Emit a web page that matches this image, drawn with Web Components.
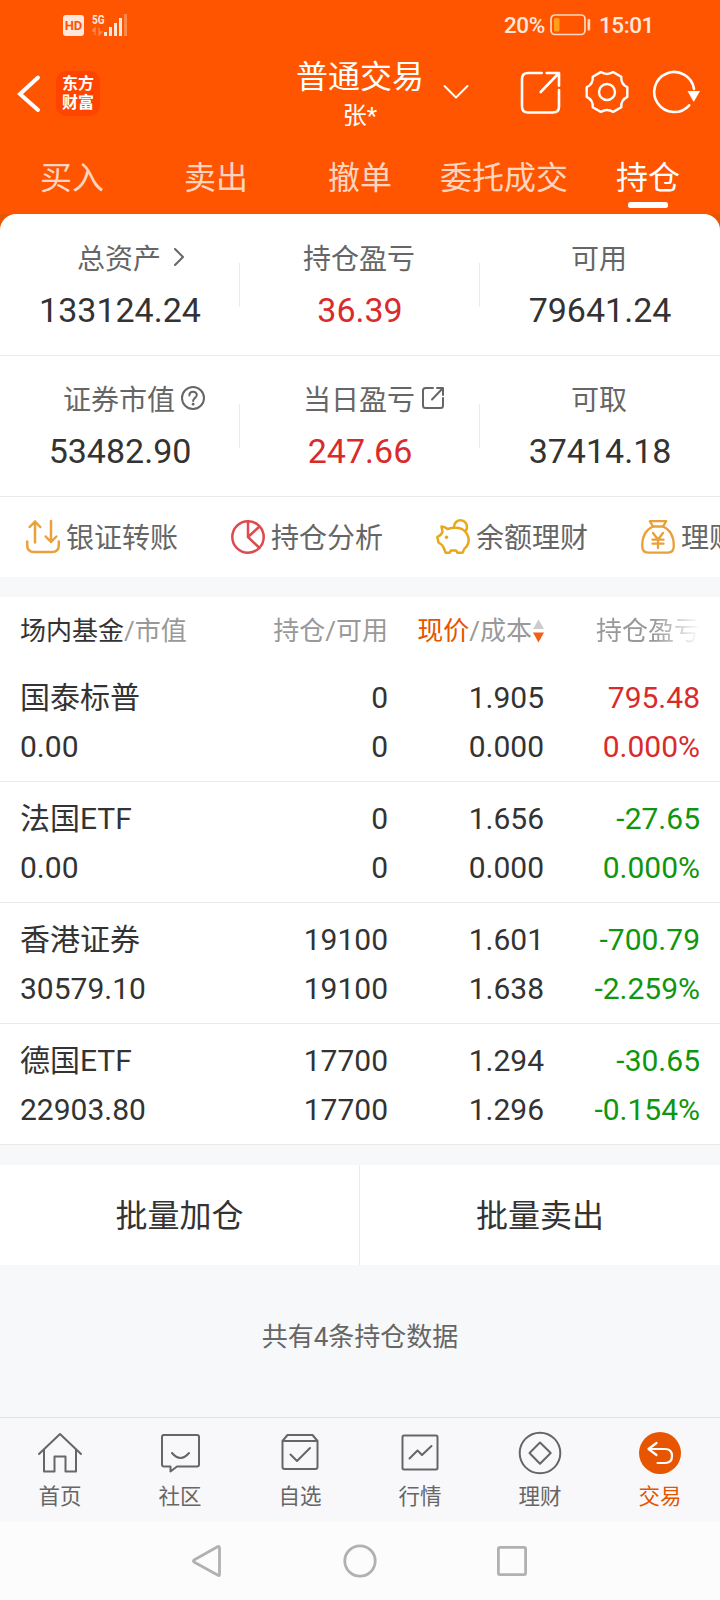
<!DOCTYPE html>
<html lang="zh-CN">
  <head>
    <meta charset="utf-8" />
    <meta name="viewport" content="width=device-width, initial-scale=1"/>
    <title>持仓</title>
    <style>
      body {
        margin: 0;
        background: #f7f8fa;
        color: #333;
        font-family: Roboto, "Noto Sans CJK SC", sans-serif;
      }
    </style>
  </head>
  <body>
    <trade-app>
      <status-bar slot="top"></status-bar>
      <trade-header slot="top" user="张*">普通交易</trade-header>
      <trade-tabs slot="top">
        <trade-tab>买入</trade-tab>
        <trade-tab>卖出</trade-tab>
        <trade-tab>撤单</trade-tab>
        <trade-tab>委托成交</trade-tab>
        <trade-tab active>持仓</trade-tab>
      </trade-tabs>

      <asset-grid>
        <asset-cell value="133124.24">总资产<ui-icon slot="icon" name="next"></ui-icon></asset-cell>
        <asset-cell value="36.39" up>持仓盈亏</asset-cell>
        <asset-cell value="79641.24">可用</asset-cell>
        <asset-cell value="53482.90">证券市值<ui-icon slot="icon" name="help"></ui-icon></asset-cell>
        <asset-cell value="247.66" up>当日盈亏<ui-icon slot="icon" name="open"></ui-icon></asset-cell>
        <asset-cell value="37414.18">可取</asset-cell>
      </asset-grid>

      <quick-actions>
        <quick-action icon="transfer">银证转账</quick-action>
        <quick-action icon="pie">持仓分析</quick-action>
        <quick-action icon="piggy">余额理财</quick-action>
        <quick-action icon="bag">理财</quick-action>
      </quick-actions>

      <holding-table>
        <holding-row name="国泰标普" market="0.00" held="0" free="0" price="1.905" cost="0.000" profit="795.48" rate="0.000%" trend="up"></holding-row>
        <holding-row name="法国ETF" market="0.00" held="0" free="0" price="1.656" cost="0.000" profit="-27.65" rate="0.000%" trend="down"></holding-row>
        <holding-row name="香港证券" market="30579.10" held="19100" free="19100" price="1.601" cost="1.638" profit="-700.79" rate="-2.259%" trend="down"></holding-row>
        <holding-row name="德国ETF" market="22903.80" held="17700" free="17700" price="1.294" cost="1.296" profit="-30.65" rate="-0.154%" trend="down"></holding-row>
      </holding-table>

      <batch-bar>
        <span>批量加仓</span>
        <span>批量卖出</span>
      </batch-bar>
      <list-summary>共有4条持仓数据</list-summary>

      <app-nav slot="bottom">
        <nav-item icon="home">首页</nav-item>
        <nav-item icon="chat">社区</nav-item>
        <nav-item icon="check">自选</nav-item>
        <nav-item icon="chart">行情</nav-item>
        <nav-item icon="money">理财</nav-item>
        <nav-item icon="trade" active>交易</nav-item>
      </app-nav>
      <system-nav slot="bottom"></system-nav>
    </trade-app>

    <script>
      // name: [width, height, markup]
      const ICONS = {
        back: [24, 38, '<path d="M21 3.500 3 20 21 36" stroke-width="4" stroke-linejoin="miter"/>'],
        down: [24, 14, '<path d="M.5 1 12 12.500 23.500 1" stroke-width="1.900"/>'],
        share: [44, 46, '<path d="M23.700 4H10Q4 4 4 10V37.500Q4 43.500 10 43.500H35Q41 43.500 41 37.500V21M28.700 4H41V16.700M22.700 23 40.500 4.500" stroke-width="2.600"/>'],
        gear: [46, 46, '<g transform="translate(23 23)" stroke-width="2.400"><path d="M20.300-4.800V4.800Q13.600 8 14.300 15.200L6.200 19.900Q0 16-6.200 19.900L-14.300 15.200Q-13.600 8-20.300 4.800V-4.800Q-13.600-8-14.300-15.200L-6.200-19.900Q0-16 6.200-19.900L14.300-15.200Q13.600-8 20.300-4.800Z"/><circle r="8"/></g>'],
        refresh: [48, 46, '<path d="M37.200 36.300A20 20 0 1 1 42 20" stroke-width="2.600"/><path d="M35.500 22H48L41.700 33Z" fill="currentColor" stroke="none"/>'],
        next: [10, 18, '<path d="M1 1 9 9 1 17" stroke-width="2"/>'],
        help: [24, 24, '<circle cx="12" cy="12" r="11" stroke-width="2"/><path d="M8.400 9.400C8.400 4.600 15.800 4.700 15.800 9.100 15.800 11.800 12.100 12 12.100 15" stroke-width="2"/><circle cx="12.100" cy="18.200" r="1.400" fill="currentColor" stroke="none"/>'],
        open: [24, 24, '<path d="M12 2H4.500Q2 2 2 4.500V19.500Q2 22 4.500 22H19.500Q22 22 22 19.500V12M16 2H22V9M11 13.500 21.500 2.500" stroke-width="2"/>'],
        transfer: [34, 34, '<g stroke="#eba13b" stroke-width="2.500"><path d="M9 22.500V1.500M3.700 7 9 1.500 14.300 7M25 1V22M19.700 16.500 25 22 30.300 16.500"/><path d="M1.200 21.500V25Q1.200 32 8 32H26Q32.800 32 32.800 25V21.500"/></g>'],
        pie: [34, 34, '<g stroke="#dd4b4f" stroke-width="2.500"><circle cx="17" cy="17" r="15.700"/><path d="M17 1V17L28.500 28M17 17 28.500 6.500"/></g>'],
        piggy: [34, 34, '<g stroke="#e8a81c" stroke-width="2.500"><path d="M5.500 6.500Q8.500 6.500 11.500 9 19 6.500 26 9 32.700 13 32.700 20.500 32 26 28.500 28.500L26.500 32.700H21.500L20 30.500H15L13.500 32.700H9.500L8 28.500Q6.500 24.500 2.500 22.500L1.300 17Q4.500 16 6.500 12Z"/><path d="M18 6.500A6.500 6.500 0 0 1 31 7Q31 9.500 29.500 11"/><circle cx="10.500" cy="17.300" r="1.800" fill="#e8a81c" stroke="none"/></g>'],
        bag: [34, 34, '<g stroke="#e9a03a" stroke-width="2.300"><path d="M8.800 1.200H25.200L22 6.500H12Z"/><path d="M12 6.500C5 9.500 1.200 17 1.200 26Q1.200 32.600 7 32.600H27Q32.800 32.600 32.800 26C32.800 17 29 9.500 22 6.500M12 13 17 19.500 22 13M11.500 19.700H22.500M11.500 23.700H22.500M17 19.500V28"/></g>'],
        home: [44, 44, '<path d="M1 23 22 3 43 23M6 19V40.500H16.500V25.500H27.500V40.500H38V19"/>'],
        chat: [44, 44, '<path d="M5 4H39Q41 4 41 6V33.500Q41 35.500 39 35.500H19L12.500 40.500V35.500H6Q4 35.500 4 33.500V6Q4 4 6 4M14 22Q22.500 32 31 22"/>'],
        check: [44, 44, '<path d="M4.500 10 9.500 4H34.500L39.500 10M4.500 10H39.500V36Q39.500 38 37.500 38H6.500Q4.500 38 4.500 36ZM12.500 23.500 19 30 32 17"/>'],
        chart: [44, 44, '<rect x="4.500" y="4.500" width="35" height="34" rx="1.500"/><path d="M11.500 27.500 19.500 19.500 24 24 33.500 15"/>'],
        money: [44, 44, '<circle cx="22" cy="22" r="20.300"/><path d="M22 11.500 32.700 22 22 32.700 11.500 22Z"/>'],
        trade: [44, 44, '<circle cx="22" cy="22" r="21" fill="#e85500" stroke="none"/><path d="M18.500 12 10.500 18 18.500 24M11 18H27Q34 18 34 25T27 32H19.500" stroke="#fff" stroke-width="2.200"/>'],
        sysback: [32, 36, '<path d="M26 3.500Q27.500 3 27.500 5V31Q27.500 33 26 32.300L2 19Q.7 18 2 17Z" stroke="#b1b1b1" stroke-width="2.800"/>'],
        syshome: [36, 36, '<circle cx="18" cy="18" r="15.200" stroke="#b1b1b1" stroke-width="2.800"/>'],
        sysrecent: [32, 32, '<rect x="2.400" y="2.400" width="27.200" height="27.200" rx="1.500" stroke="#b1b1b1" stroke-width="2.800"/>']
      };

      class BaseElement extends HTMLElement {
        constructor() {
          super();
          this.attachShadow({mode: 'open'}).innerHTML = this.render();
        }
        attr(name) {
          return this.getAttribute(name) || '';
        }
      }

      class UiIcon extends BaseElement {
        render() {
          const [w, h, body] = ICONS[this.attr('name')];
          return `
            <style>
              :host { display: block; flex: none; width: ${w}px; height: ${h}px; }
              svg { display: block; overflow: visible; }
            </style>
            <svg width="${w}" height="${h}" viewBox="0 0 ${w} ${h}" fill="none" stroke="currentColor"
              stroke-width="2" stroke-linejoin="round" stroke-linecap="round">${body}</svg>
          `;
        }
      }

      class TradeApp extends BaseElement {
        render() {
          return `
            <style>
              :host { display: flex; flex-direction: column; width: 720px; height: 1600px; overflow: hidden; }
              header { background: #ff5500; color: #fff; height: 214px; }
              main { flex: 1; background: linear-gradient(#e85500 0 20px, transparent 20px); }
            </style>
            <header><slot name="top"></slot></header>
            <main><slot></slot></main>
            <footer><slot name="bottom"></slot></footer>
          `;
        }
      }

      class StatusBar extends BaseElement {
        render() {
          return `
            <style>
              :host {
                display: flex; justify-content: space-between; align-items: center;
                box-sizing: border-box; height: 50px; padding: 0 66px 0 63px;
                color: #ffe7db; font-size: 22.500px; font-weight: 500; line-height: 30px;
              }
              div { display: flex; align-items: center; }
              .hd {
                width: 21px; height: 21px; border-radius: 3px; margin-right: 8px;
                background: #ffe7db; color: #ff5500; font-size: 13px; font-weight: 700;
                line-height: 21px; text-align: center;
              }
              svg { display: block; }
              .battery { margin: 0 8px 0 5px; }
              .level { letter-spacing: -.4px; }
              .time { letter-spacing: -.4px; }
            </style>
            <div>
              <span class="hd">HD</span>
              <svg width="36" height="24" viewBox="0 0 36 24" fill="#ffe7db">
                <text x="0" y="10.500" font-size="13.500" font-weight="700" textLength="12.500" lengthAdjust="spacingAndGlyphs">5G</text>
                <path d="M3 22V15L0 18H3M7 15V22L10 19H7" stroke="#ffe7db" stroke-width="1.300" fill="none" opacity=".35"/>
                <path d="M12 19h3v4h-3zM17 14h3v9h-3zM22 10h3v13h-3zM27 5h3v18h-3z"/>
                <path d="M32 1h3v22h-3z" opacity=".35"/>
              </svg>
            </div>
            <div>
              <span class="level">20%</span>
              <svg class="battery" width="41" height="22" viewBox="0 0 41 22">
                <rect x="1" y="1" width="34" height="19.500" rx="4" fill="none" stroke="#ffd9c5" stroke-width="1.700"/>
                <rect x="4" y="4" width="5.500" height="13.500" rx="1.500" fill="#ff9f1a"/>
                <rect x="37.500" y="5" width="2.700" height="11.500" rx="1" fill="#ffd9c5"/>
              </svg>
              <span class="time">15:01</span>
            </div>
          `;
        }
      }

      class TradeHeader extends BaseElement {
        render() {
          return `
            <style>
              :host { display: grid; grid-template-columns: 280px 160px 280px; align-items: center; height: 86px; }
              div { display: flex; align-items: center; }
              .left { padding-left: 17px; gap: 15px; }
              .logo {
                box-sizing: border-box; width: 44px; height: 45px; padding-top: 3px; border-radius: 10px;
                background: #ff4400; font-size: 16px; font-weight: 700; line-height: 19px; text-align: center;
              }
              .title { flex-direction: column; padding-top: 2px; font-size: 32px; line-height: 44px; }
              .title small { font-size: 24px; line-height: 34px; }
              .right { padding: 0 0 2px 4px; }
              .share { margin: 0 22px 0 50px; }
              .refresh { margin-left: 22px; }
            </style>
            <div class="left">
              <ui-icon name="back"></ui-icon>
              <span class="logo">东方<br>财富</span>
            </div>
            <div class="title"><slot></slot><small>${this.attr('user')}</small></div>
            <div class="right">
              <ui-icon name="down"></ui-icon>
              <ui-icon class="share" name="share"></ui-icon>
              <ui-icon name="gear"></ui-icon>
              <ui-icon class="refresh" name="refresh"></ui-icon>
            </div>
          `;
        }
      }

      class TradeTabs extends BaseElement {
        render() {
          return `
            <style>
              :host { display: grid; grid-template-columns: repeat(5, 1fr); height: 78px; }
            </style>
            <slot></slot>
          `;
        }
      }

      class TradeTab extends BaseElement {
        render() {
          return `
            <style>
              :host {
                display: flex; flex-direction: column; align-items: center; padding-top: 20px;
                color: #ffd5c0; font-size: 32px; line-height: 44px; white-space: nowrap;
              }
              :host([active]) { color: #fff; }
              :host([active])::after {
                content: ""; width: 40px; height: 6px; margin-top: 2px; border-radius: 2.500px; background: #fff;
              }
            </style>
            <slot></slot>
          `;
        }
      }

      class AssetGrid extends BaseElement {
        render() {
          return `
            <style>
              :host {
                display: grid; grid-template-columns: repeat(3, 1fr); padding-top: 1px;
                background: #fff; border-radius: 16px 16px 0 0;
              }
            </style>
            <slot></slot>
          `;
        }
      }

      class AssetCell extends BaseElement {
        render() {
          return `
            <style>
              :host {
                display: flex; flex-direction: column; align-items: center; box-sizing: border-box;
                height: 141px; padding-top: 25px; border-bottom: 1px solid #ebebeb;
                background: linear-gradient(#ebebeb, #ebebeb) right 48px / 1px 44px no-repeat;
                background-position: right 48px;
              }
              :host(:nth-child(3n)) { background: none; }
              .label {
                display: flex; align-items: center; padding-right: 2px;
                color: #666; font-size: 28px; line-height: 40px;
              }
              /* trailing icon hangs outside, the label stays centred */
              .tail { display: flex; width: 0; }
              ::slotted(ui-icon) { margin: 0 0 6px 6px; }
              ::slotted(ui-icon[name=next]) { margin-left: 13px; }
              .value { margin-top: 9px; font-size: 34px; line-height: 42px; }
              :host([up]) .value { color: #d92b2b; }
            </style>
            <div class="label"><slot></slot><span class="tail"><slot name="icon"></slot></span></div>
            <div class="value">${this.attr('value')}</div>
          `;
        }
      }

      class QuickActions extends BaseElement {
        render() {
          return `
            <style>
              :host {
                display: flex; gap: 53px; box-sizing: border-box; height: 80px; padding-left: 26px;
                background: #fff; overflow: hidden;
              }
            </style>
            <slot></slot>
          `;
        }
      }

      class QuickAction extends BaseElement {
        render() {
          return `
            <style>
              :host {
                display: flex; flex: none; align-items: center; gap: 6px;
                color: #666; font-size: 28px; line-height: 40px;
              }
              span { margin-top: 4px; }
            </style>
            <ui-icon name="${this.attr('icon')}"></ui-icon>
            <span><slot></slot></span>
          `;
        }
      }

      class HoldingTable extends BaseElement {
        render() {
          return `
            <style>
              :host { display: block; margin: 20px 0; background: #fff; }
              .head {
                display: grid; grid-template-columns: 200px 168px 156px 156px; align-items: center;
                box-sizing: border-box; height: 64px; padding: 3px 20px 0;
                color: #999; font-size: 26px; line-height: 36px; text-align: right;
              }
              .head > :first-child { text-align: left; }
              b { color: #333; font-weight: 400; }
              .sorted { display: flex; justify-content: flex-end; align-items: center; }
              .sorted b { color: #e65400; }
              .sorted svg { margin-left: 1px; }
              .more {
                -webkit-mask-image: linear-gradient(90deg, #000 110px, transparent 156px);
                mask-image: linear-gradient(90deg, #000 110px, transparent 156px);
              }
            </style>
            <div class="head">
              <span><b>场内基金</b>/市值</span>
              <span>持仓/可用</span>
              <span class="sorted"><span><b>现价</b>/成本</span>
                <svg width="11" height="24" viewBox="0 0 11 24"><path d="M0 10 5.500 .5 11 10Z" fill="#ccc"/><path d="M0 13.500H11L5.500 23.500Z" fill="#f26018"/></svg>
              </span>
              <span class="more">持仓盈亏</span>
            </div>
            <slot></slot>
          `;
        }
      }

      class HoldingRow extends BaseElement {
        render() {
          const cell = (a, b, cls = '') =>
            `<div class="${cls}">${this.attr(a)}<br>${this.attr(b)}</div>`;
          return `
            <style>
              :host {
                display: grid; grid-template-columns: 200px 168px 156px 156px; box-sizing: border-box;
                height: 121px; padding: 12px 20px 0; border-bottom: 1px solid #ebebeb;
                font-size: 30px; line-height: 49px; text-align: right;
              }
              div:first-of-type { text-align: left; }
              .up { color: #d92b2b; }
              .down { color: #0f960f; }
            </style>
            ${cell('name', 'market')}
            ${cell('held', 'free')}
            ${cell('price', 'cost')}
            ${cell('profit', 'rate', this.attr('trend'))}
          `;
        }
      }

      class BatchBar extends BaseElement {
        render() {
          return `
            <style>
              :host { display: grid; grid-template-columns: 359px 361px; height: 100px; background: #fff; }
              ::slotted(span) {
                box-sizing: border-box; height: 100px; border-left: 1px solid #ebebeb;
                font-size: 32px; line-height: 103px; text-align: center;
              }
              ::slotted(span:first-child) { border: 0; }
            </style>
            <slot></slot>
          `;
        }
      }

      class ListSummary extends BaseElement {
        render() {
          return `
            <style>
              :host { display: block; padding-top: 53px; color: #666; font-size: 26px; line-height: 38px; text-align: center; }
            </style>
            <slot></slot>
          `;
        }
      }

      class AppNav extends BaseElement {
        render() {
          return `
            <style>
              :host {
                display: grid; grid-template-columns: repeat(6, 1fr); box-sizing: border-box;
                height: 105px; border-top: 1px solid #e0e1e3; background: #f8f8fa;
              }
            </style>
            <slot></slot>
          `;
        }
      }

      class NavItem extends BaseElement {
        render() {
          return `
            <style>
              :host {
                display: flex; flex-direction: column; align-items: center; padding-top: 13px;
                color: #666; font-size: 21.500px; line-height: 30px;
              }
              :host([active]) { color: #e65400; }
              span { margin-top: 7px; }
            </style>
            <ui-icon name="${this.attr('icon')}"></ui-icon>
            <span><slot></slot></span>
          `;
        }
      }

      class SystemNav extends BaseElement {
        render() {
          return `
            <style>
              :host {
                display: grid; grid-template-columns: repeat(3, 152px); justify-content: center;
                align-items: center; justify-items: center; height: 78px; background: #fcfcfc;
              }
            </style>
            <ui-icon name="sysback"></ui-icon>
            <ui-icon name="syshome"></ui-icon>
            <ui-icon name="sysrecent"></ui-icon>
          `;
        }
      }

      customElements.define('ui-icon', UiIcon);
      customElements.define('trade-app', TradeApp);
      customElements.define('status-bar', StatusBar);
      customElements.define('trade-header', TradeHeader);
      customElements.define('trade-tabs', TradeTabs);
      customElements.define('trade-tab', TradeTab);
      customElements.define('asset-grid', AssetGrid);
      customElements.define('asset-cell', AssetCell);
      customElements.define('quick-actions', QuickActions);
      customElements.define('quick-action', QuickAction);
      customElements.define('holding-table', HoldingTable);
      customElements.define('holding-row', HoldingRow);
      customElements.define('batch-bar', BatchBar);
      customElements.define('list-summary', ListSummary);
      customElements.define('app-nav', AppNav);
      customElements.define('nav-item', NavItem);
      customElements.define('system-nav', SystemNav);
    </script>
  </body>
</html>
